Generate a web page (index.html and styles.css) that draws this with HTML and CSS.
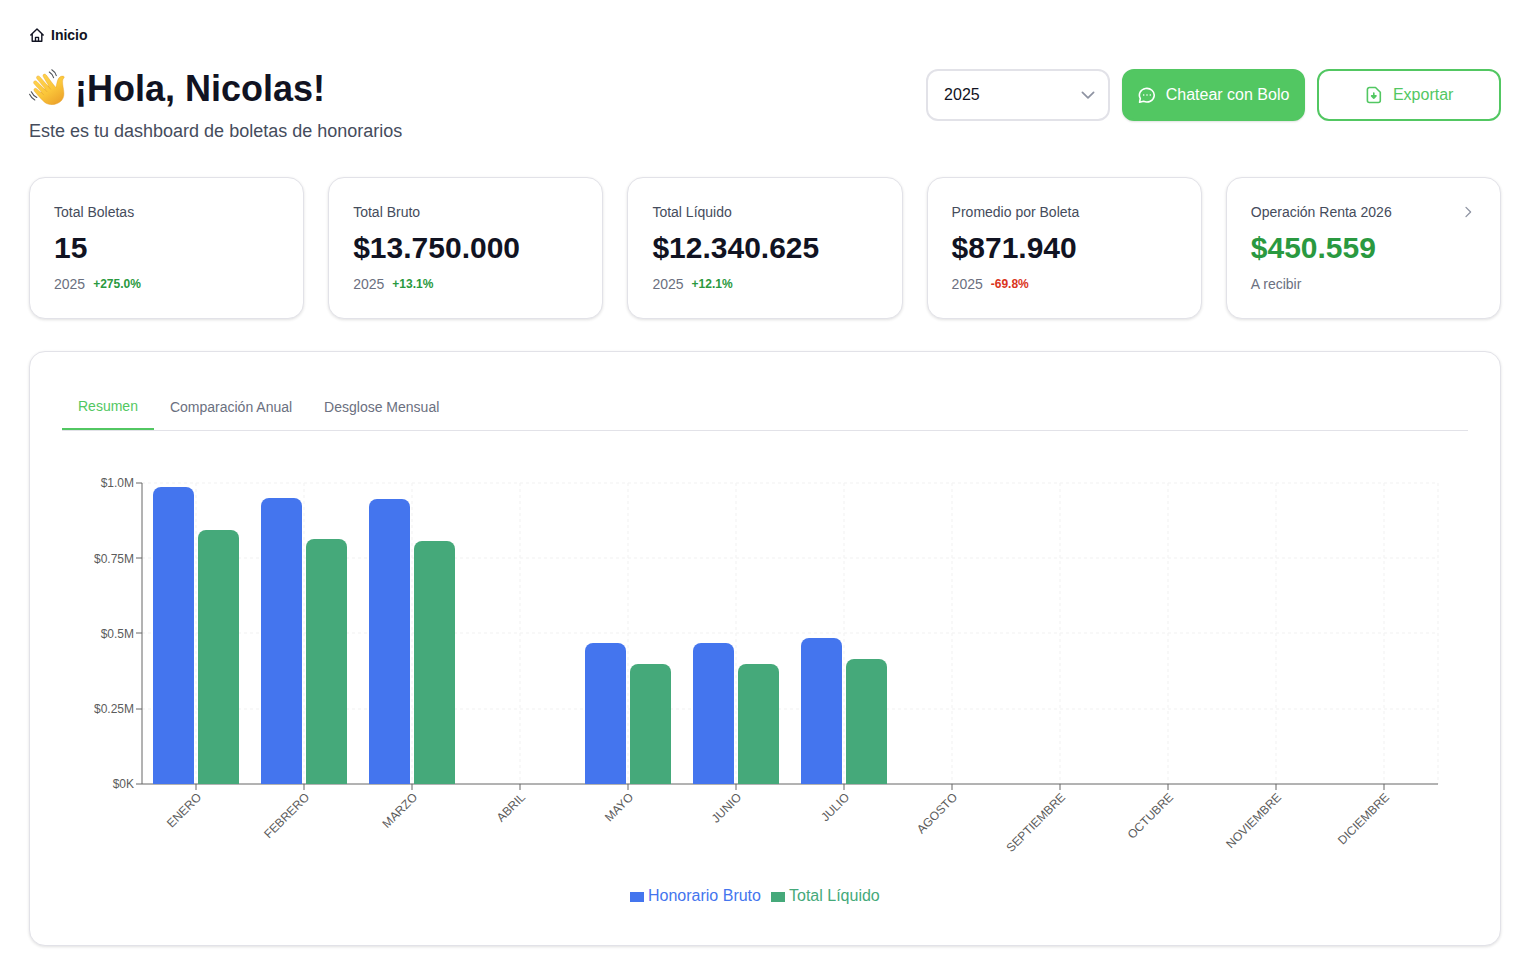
FILE: index.html
```html
<!DOCTYPE html>
<html lang="es">
<head>
<meta charset="utf-8">
<meta name="viewport" content="width=device-width, initial-scale=1">
<title>Inicio</title>
<link rel="stylesheet" href="styles.css">
</head>
<body>
<main class="page">
  <nav class="breadcrumb" aria-label="Ruta">
    <a href="#" class="crumb">
      <svg class="icon-home" viewBox="0 0 16 16" aria-hidden="true"><path d="M1.800 8.100 8 2l6.200 6.100M3.200 7v7.200h9.600V7M6.500 14v-3.600h3V14"/></svg>
      <span>Inicio</span>
    </a>
  </nav>

  <header class="header">
    <div>
      <h1 class="title">
        <svg class="wave" viewBox="0 0 36 36" aria-hidden="true">
          <defs>
            <linearGradient id="skin" x1="0" y1="0" x2="0.7" y2="1">
              <stop offset="0" stop-color="#ffd553"/><stop offset="0.6" stop-color="#fbc73a"/><stop offset="1" stop-color="#eda52b"/>
            </linearGradient>
          </defs>
          <path d="M17.500 34.500C14 32.500 9.500 27 5.400 22.200c-1.500-2 .7-3.800 2.400-2.300l4.200 3.700.5-.5-7.400-8.300c-1.600-2 .9-4.100 2.700-2.300l7.600 7.600.5-.5-7.900-9.800c-1.600-2.200 1.100-4 2.800-2.100l8.200 9.400.6-.4-5.300-9c-1.300-2.200 1.500-3.700 3-1.600 3.200 4.500 6.500 8.700 9.500 12.500.9-2.600.9-5 1.900-7.500 1.100-2.700 3.200-4.400 5.600-3.900 1 .2 1.200 1.100.6 1.700-1.900 1.900-1.400 5.300-.7 9.500 1 5.600 1.300 9.700-1.600 13-3.400 3.800-10.100 5.600-15.100 3.100z" fill="url(#skin)" stroke="#e5a02b" stroke-width=".4"/>
          <path d="m12 23 2.600 2.800M15.300 19.900l2.800 2.900M19 17l2.500 3.100" fill="none" stroke="#e5a636" stroke-width=".7" stroke-linecap="round"/>
          <path d="M20.300 3c2.100 1.300 3.500 3.200 4.300 5.700M22.800.8c2.300 1.400 3.700 3.400 4.500 5.800M.6 25.300c1.100 2.500 2.700 4.300 5.200 5.700M2.300 22.700c1.200 2.500 3 4.500 5.500 5.800" fill="none" stroke="#505359" stroke-width="1.100" stroke-linecap="round"/>
        </svg>
        <span>¡Hola, Nicolas!</span>
      </h1>
      <p class="subtitle">Este es tu dashboard de boletas de honorarios</p>
    </div>
    <div class="actions">
      <div class="year">
        <select class="year-select" aria-label="Año"><option>2025</option><option>2024</option></select>
        <svg class="year-arrow" viewBox="0 0 16 16" aria-hidden="true"><path d="m2.400 5.300 5.600 5.600 5.600-5.600"/></svg>
      </div>
      <button type="button" class="btn btn-solid">
        <svg class="icon" viewBox="0 0 18 18" aria-hidden="true"><path d="M2.300 12.400A7.400 6.800 0 1 1 5.600 15.300L1.600 16.200z"/><path class="dots" d="M5.700 9h.01M9 9h.01M12.300 9h.01"/></svg>
        <span>Chatear con Bolo</span>
      </button>
      <button type="button" class="btn btn-outline">
        <svg class="icon" viewBox="0 0 18 18" aria-hidden="true"><path d="M4.400 1.500h6.100l4.800 4.800v8.200a2 2 0 0 1-2 2H4.400a2 2 0 0 1-2-2v-11a2 2 0 0 1 2-2z"/><path d="M8.800 7v5.200M6.600 9.900l2.200 2.300 2.200-2.300z" class="arrow"/></svg>
        <span>Exportar</span>
      </button>
    </div>
  </header>

  <section class="stats" aria-label="Totales">
    <article class="card stat">
      <h2 class="stat-label">Total Boletas</h2>
      <p class="stat-value">15</p>
      <p class="stat-foot"><span>2025</span><strong class="up">+275.0%</strong></p>
    </article>
    <article class="card stat">
      <h2 class="stat-label">Total Bruto</h2>
      <p class="stat-value">$13.750.000</p>
      <p class="stat-foot"><span>2025</span><strong class="up">+13.1%</strong></p>
    </article>
    <article class="card stat">
      <h2 class="stat-label">Total Líquido</h2>
      <p class="stat-value">$12.340.625</p>
      <p class="stat-foot"><span>2025</span><strong class="up">+12.1%</strong></p>
    </article>
    <article class="card stat">
      <h2 class="stat-label">Promedio por Boleta</h2>
      <p class="stat-value">$871.940</p>
      <p class="stat-foot"><span>2025</span><strong class="down">-69.8%</strong></p>
    </article>
    <a href="#" class="card stat">
      <h2 class="stat-label"><span>Operación Renta 2026</span>
        <svg class="icon-next" viewBox="0 0 16 16" aria-hidden="true"><path d="m6 3.400 4.600 4.600L6 12.600"/></svg>
      </h2>
      <p class="stat-value refund">$450.559</p>
      <p class="stat-foot"><span>A recibir</span></p>
    </a>
  </section>

  <section class="card panel">
    <div class="tabs" role="tablist">
      <button type="button" role="tab" aria-selected="true" class="tab tab-active">Resumen</button>
      <button type="button" role="tab" aria-selected="false" class="tab">Comparación Anual</button>
      <button type="button" role="tab" aria-selected="false" class="tab">Desglose Mensual</button>
    </div>
    <svg class="chart" viewBox="0 0 1406 450" role="img" aria-label="Honorario Bruto y Total Líquido por mes">
      <path class="grid" d="M80 20H1376M80 95H1376M80 170H1376M80 246H1376M134 20V321M242 20V321M350 20V321M458 20V321M566 20V321M674 20V321M782 20V321M890 20V321M998 20V321M1106 20V321M1214 20V321M1322 20V321M1376 20V321"/>
      <path class="axis" d="M80 20V321H1376M74 20H80M74 95H80M74 170H80M74 246H80M74 321H80M134 321v6M242 321v6M350 321v6M458 321v6M566 321v6M674 321v6M782 321v6M890 321v6M998 321v6M1106 321v6M1214 321v6M1322 321v6"/>
      <g class="bruto">
        <path d="M91 321V32a8 8 0 0 1 8-8h25a8 8 0 0 1 8 8V321z"/>
        <path d="M199 321V43a8 8 0 0 1 8-8h25a8 8 0 0 1 8 8V321z"/>
        <path d="M307 321V44a8 8 0 0 1 8-8h25a8 8 0 0 1 8 8V321z"/>
        <path d="M523 321V188a8 8 0 0 1 8-8h25a8 8 0 0 1 8 8V321z"/>
        <path d="M631 321V188a8 8 0 0 1 8-8h25a8 8 0 0 1 8 8V321z"/>
        <path d="M739 321V183a8 8 0 0 1 8-8h25a8 8 0 0 1 8 8V321z"/>
      </g>
      <g class="liquido">
        <path d="M136 321V75a8 8 0 0 1 8-8h25a8 8 0 0 1 8 8V321z"/>
        <path d="M244 321V84a8 8 0 0 1 8-8h25a8 8 0 0 1 8 8V321z"/>
        <path d="M352 321V86a8 8 0 0 1 8-8h25a8 8 0 0 1 8 8V321z"/>
        <path d="M568 321V209a8 8 0 0 1 8-8h25a8 8 0 0 1 8 8V321z"/>
        <path d="M676 321V209a8 8 0 0 1 8-8h25a8 8 0 0 1 8 8V321z"/>
        <path d="M784 321V204a8 8 0 0 1 8-8h25a8 8 0 0 1 8 8V321z"/>
      </g>
      <g class="tick">
        <text x="72" y="24">$1.0M</text>
        <text x="72" y="100">$0.75M</text>
        <text x="72" y="175">$0.5M</text>
        <text x="72" y="250">$0.25M</text>
        <text x="72" y="325">$0K</text>
      </g>
      <g class="tick">
        <text transform="translate(140 335) rotate(-45)">ENERO</text>
        <text transform="translate(248 335) rotate(-45)">FEBRERO</text>
        <text transform="translate(356 335) rotate(-45)">MARZO</text>
        <text transform="translate(464 335) rotate(-45)">ABRIL</text>
        <text transform="translate(572 335) rotate(-45)">MAYO</text>
        <text transform="translate(680 335) rotate(-45)">JUNIO</text>
        <text transform="translate(788 335) rotate(-45)">JULIO</text>
        <text transform="translate(896 335) rotate(-45)">AGOSTO</text>
        <text transform="translate(1004 335) rotate(-45)">SEPTIEMBRE</text>
        <text transform="translate(1112 335) rotate(-45)">OCTUBRE</text>
        <text transform="translate(1220 335) rotate(-45)">NOVIEMBRE</text>
        <text transform="translate(1328 335) rotate(-45)">DICIEMBRE</text>
      </g>
      <g class="bruto legend"><rect x="568" y="429" width="14" height="10"/><text x="586" y="438">Honorario Bruto</text></g>
      <g class="liquido legend"><rect x="709" y="429" width="14" height="10"/><text x="727" y="438">Total Líquido</text></g>
    </svg>
  </section>
</main>
</body>
</html>
```
FILE: styles.css
```css
* { box-sizing: border-box; }
body {
  margin: 0;
  background: #fff;
  color: #111322;
  font-family: "Liberation Sans", Arial, sans-serif;
}
h1, h2, p { margin: 0; }
svg { display: block; flex: none; }
a { color: inherit; text-decoration: none; }
button, select { font: inherit; cursor: pointer; }

.page { padding: 25px 34px 32px 29px; }

.crumb {
  display: inline-flex;
  align-items: center;
  gap: 6px;
  font-size: 14px;
  line-height: 20px;
  font-weight: 700;
}
.breadcrumb { display: flex; }
.icon-home, .year-arrow, .icon-next { width: 16px; height: 16px; fill: none; stroke-linecap: round; stroke-linejoin: round; }
.icon-home { stroke: #111322; stroke-width: 1.4; }

.header {
  display: flex;
  justify-content: space-between;
  align-items: flex-start;
  gap: 24px;
  margin-top: 24px;
}
.title {
  display: flex;
  align-items: flex-start;
  gap: 10px;
  font-size: 36px;
  line-height: 40px;
  font-weight: 700;
}
.wave { width: 36px; height: 36px; }
.subtitle { margin-top: 8px; font-size: 18px; line-height: 28px; color: #454c5c; }

.actions { display: grid; grid-template-columns: repeat(3, 1fr); gap: 12px; }
.year { position: relative; }
.year-select {
  width: 100%;
  height: 52px;
  padding: 0 40px 2px 16px;
  appearance: none;
  border: 2px solid #e2e2e8;
  border-radius: 12px;
  background: #fff;
  color: #111322;
  font-size: 16px;
}
.year-arrow { position: absolute; right: 14px; top: 18px; stroke: #8e93a2; stroke-width: 1.7; pointer-events: none; }
.btn {
  display: flex;
  align-items: center;
  justify-content: center;
  gap: 10px;
  height: 52px;
  padding: 0 14px;
  border: 2px solid #52c762;
  border-radius: 12px;
  font-size: 16px;
  white-space: nowrap;
}
.btn-solid { background: #52c762; color: #fff; box-shadow: 0 1px 2px rgba(0, 0, 0, 0.12); }
.btn-outline { background: #fff; color: #52c762; }
.icon { width: 18px; height: 18px; fill: none; stroke: currentColor; stroke-width: 1.6; stroke-linecap: round; stroke-linejoin: round; }
.arrow { fill: currentColor; }

.card {
  border: 1px solid #e2e2e8;
  border-radius: 16px;
  background: #fff;
  box-shadow: 0 1px 3px rgba(0, 0, 0, 0.12);
}
.stats { display: grid; grid-template-columns: repeat(5, 1fr); gap: 24px; margin-top: 32px; }
.stat { display: flex; flex-direction: column; gap: 8px; padding: 24px; }
.stat-label {
  display: flex;
  justify-content: space-between;
  align-items: center;
  font-size: 14px;
  line-height: 20px;
  font-weight: 400;
  color: #454c5c;
}
.icon-next { stroke: #8e93a2; stroke-width: 1.3; }
.stat-value { font-size: 30px; line-height: 36px; font-weight: 700; }
.stat-foot { display: flex; align-items: center; gap: 8px; font-size: 14px; line-height: 20px; color: #6b7080; }
.stat-foot strong { font-size: 12px; }
.up, .refund { color: #2a9940; }
.down { color: #da3420; }

.panel { margin-top: 32px; padding: 32px; }
.tabs { display: flex; border-bottom: 1px solid #e2e2e8; }
.tab {
  height: 46px;
  padding: 0 16px;
  border: 0;
  background: none;
  font-size: 14px;
  color: #6b7080;
}
.tab-active { border-bottom: 2px solid #52c762; color: #52c762; }

.chart { width: 100%; height: auto; margin-top: 32px; }
.grid { fill: none; stroke: #f1f1f1; stroke-dasharray: 3 3; }
.axis { fill: none; stroke: #666; }
.bruto { fill: #4475ee; }
.liquido { fill: #45a97a; }
.tick { fill: #5c5c5c; font-size: 12px; text-anchor: end; }
.legend { font-size: 16px; }
```
